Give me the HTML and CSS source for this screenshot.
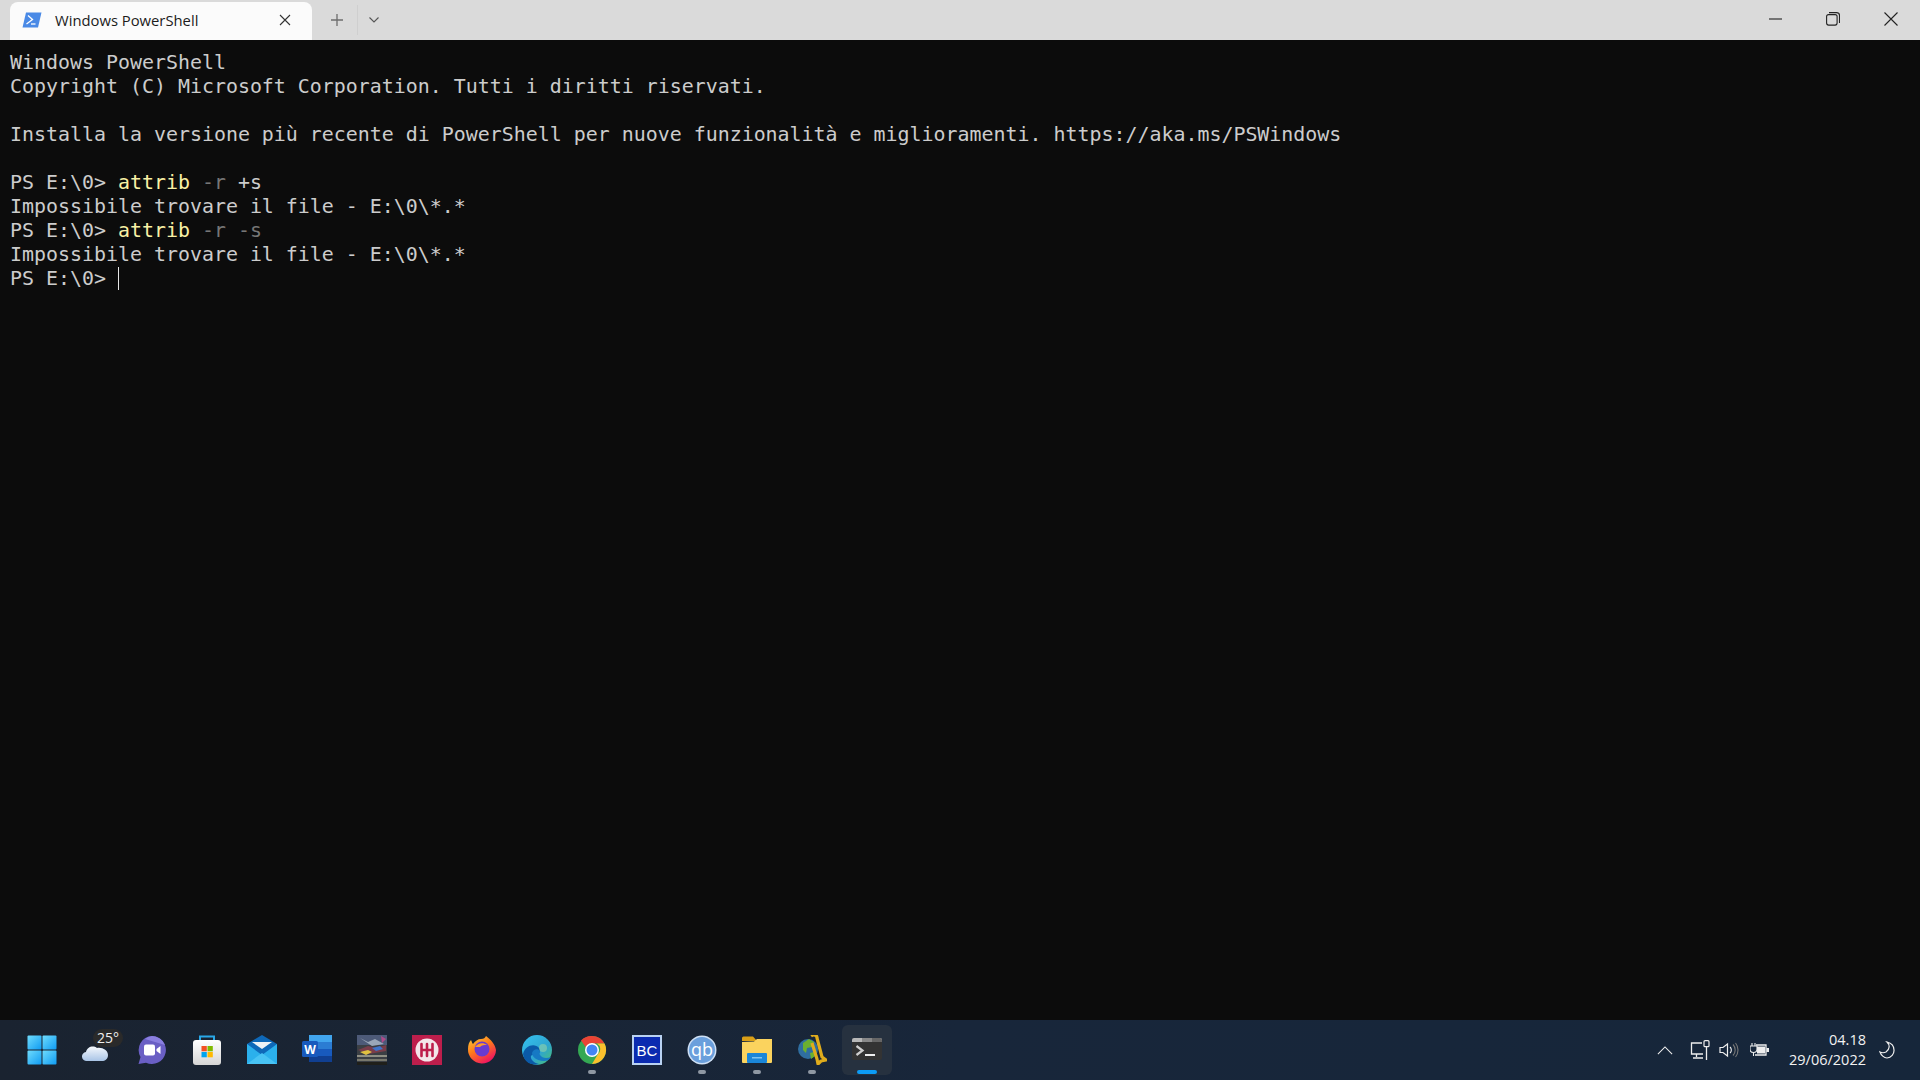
FILE: index.html
```html
<!DOCTYPE html>
<html lang="it">
<head>
<meta charset="utf-8">
<title>Windows PowerShell</title>
<link rel="stylesheet" href="styles.css">
</head>
<body>
<div class="screen">
  <header class="titlebar">
    <div class="tab">
      <svg class="tab-icon" viewBox="0 0 20 16"><path d="M4 .5h15.500L16 15.500H.5z" fill="#4a8ae6"/><path d="M6 3.500l4.500 4-6 4.500" fill="none" stroke="#fff" stroke-width="1.300"/><path d="M9 12h4.500" stroke="#fff" stroke-width="1.300"/></svg>
      <span class="tab-title">Windows PowerShell</span>
      <svg class="tab-close" viewBox="0 0 12 12"><path d="M1 1l10 10M11 1L1 11" stroke="#333" stroke-width="1.100"/></svg>
    </div>
    <div class="tab-actions">
      <svg class="plus" viewBox="0 0 12 12"><path d="M6 0v12M0 6h12" stroke="#6d6d6d" stroke-width="1.300"/></svg>
      <span class="divider"></span>
      <svg class="drop" viewBox="0 0 10 6"><path d="M.5.5L5 5 9.500.5" fill="none" stroke="#555" stroke-width="1.100"/></svg>
    </div>
    <div class="window-controls">
      <svg class="win-btn" viewBox="0 0 14 14"><path d="M1 7h13" stroke="#222" stroke-width="1.100"/></svg>
      <svg class="win-btn" viewBox="0 0 14 14"><rect x=".6" y="2.600" width="10.500" height="10.500" rx="2" fill="none" stroke="#222" stroke-width="1.100"/><path d="M3 .6h7.500a3 3 0 0 1 3 3V11" fill="none" stroke="#222" stroke-width="1.100"/></svg>
      <svg class="win-btn" viewBox="0 0 14 14"><path d="M.5.5l13 13M13.500.5l-13 13" stroke="#222" stroke-width="1.100"/></svg>
    </div>
  </header>

  <main class="terminal">
    <div class="line">Windows PowerShell</div>
    <div class="line">Copyright (C) Microsoft Corporation. Tutti i diritti riservati.</div>
    <div class="line"></div>
    <div class="line">Installa la versione più recente di PowerShell per nuove funzionalità e miglioramenti. https://aka.ms/PSWindows</div>
    <div class="line"></div>
    <div class="line">PS E:\0&gt; <span class="cmd">attrib</span> <span class="param">-r</span> +s</div>
    <div class="line">Impossibile trovare il file - E:\0\*.*</div>
    <div class="line">PS E:\0&gt; <span class="cmd">attrib</span> <span class="param">-r</span> <span class="param">-s</span></div>
    <div class="line">Impossibile trovare il file - E:\0\*.*</div>
    <div class="line">PS E:\0&gt; <span class="caret"></span></div>
  </main>

  <footer class="taskbar">
    <div class="apps">
      <div class="app">
        <svg class="icon" viewBox="0 0 30 30"><defs><linearGradient id="wg" x1="0" y1="0" x2="1" y2="1"><stop offset="0" stop-color="#6fdcfd"/><stop offset="1" stop-color="#0f9bf2"/></linearGradient></defs><rect x=".5" y=".5" width="14" height="14" rx="1" fill="url(#wg)"/><rect x="15.500" y=".5" width="14" height="14" rx="1" fill="url(#wg)"/><rect x=".5" y="15.500" width="14" height="14" rx="1" fill="url(#wg)"/><rect x="15.500" y="15.500" width="14" height="14" rx="1" fill="url(#wg)"/></svg>
      </div>
      <div class="app">
        <svg class="icon" viewBox="0 0 30 30"><defs><linearGradient id="cl" x1="0" y1="0" x2="0" y2="1"><stop offset="0" stop-color="#f4f8fd"/><stop offset="1" stop-color="#a9c4e6"/></linearGradient></defs><path d="M5 26a4.500 4.500 0 0 1-1-9c1-5 7-7 11-4 5-1 11 2 11 7 0 4-3 6-6 6z" fill="url(#cl)"/></svg>
        <span class="weather-badge">25°</span>
      </div>
      <div class="app">
        <svg class="icon" viewBox="0 0 30 30"><path d="M15 1a14 14 0 1 1-6 26.700L1.500 29 3.500 22A14 14 0 0 1 15 1z" fill="#6a5fc4"/><path d="M15 1a14 14 0 0 1 13 9L8 4a14 14 0 0 1 7-3z" fill="#8a7fe0"/><rect x="7" y="9.500" width="11" height="11" rx="2" fill="#fff"/><path d="M19.500 14l4-3v8l-4-3z" fill="#fff"/></svg>
      </div>
      <div class="app">
        <svg class="icon" viewBox="0 0 30 30"><defs><linearGradient id="st" x1="0" y1="0" x2="0" y2="1"><stop offset="0" stop-color="#fff"/><stop offset="1" stop-color="#d5d5d5"/></linearGradient></defs><path d="M8 6V1.500h14V6" fill="none" stroke="#29a8e8" stroke-width="2"/><rect x="1" y="5" width="28" height="25" rx="3" fill="url(#st)"/><rect x="9.500" y="11" width="5.300" height="5.300" fill="#f25022"/><rect x="15.500" y="11" width="5.300" height="5.300" fill="#7fba00"/><rect x="9.500" y="17" width="5.300" height="5.300" fill="#00a4ef"/><rect x="15.500" y="17" width="5.300" height="5.300" fill="#ffb900"/></svg>
      </div>
      <div class="app">
        <svg class="icon" viewBox="0 0 30 30"><path d="M0 9L15 0l15 9v20H0z" fill="#0e68b8"/><path d="M0 9l15 11L30 9v20H0z" fill="#2bb0ec"/><path d="M5 7h20l-10 7z" fill="#eef2f6"/><path d="M0 29l15-11 15 11z" fill="#48c3f4"/></svg>
      </div>
      <div class="app">
        <svg class="icon" viewBox="0 0 30 30"><rect x="7" y="0" width="23" height="27" rx="2" fill="#2b7cd3"/><rect x="7" y="0" width="23" height="7" fill="#41a5ee"/><rect x="7" y="14" width="23" height="7" fill="#185abd"/><rect x="7" y="21" width="23" height="6" fill="#103f91"/><rect x="0" y="6" width="16" height="16" rx="1.500" fill="#185abd"/><text x="8" y="19" class="word-letter">W</text></svg>
      </div>
      <div class="app">
        <svg class="icon" viewBox="0 0 30 30"><rect width="30" height="30" fill="#3b3f44"/><path d="M0 0h30v10H0z" fill="#4d5a78"/><path d="M3 3l8 4 7-3 9 5-12 2z" fill="#9aa7b8"/><path d="M24 1l5 3-4 4z" fill="#b04a8a"/><path d="M1 15l10-4 8 2 10-3v6L12 19z" fill="#7a3d4a"/><path d="M3 17l8-2 4 2-6 3z" fill="#e0c040"/><path d="M15 13l8-2 3 3-7 2z" fill="#3f74c8"/><path d="M0 20h30v2H0z" fill="#8f8f84"/><path d="M0 24h30v2H0z" fill="#77776c"/><path d="M0 27h30v3H0z" fill="#1f1f1a"/></svg>
      </div>
      <div class="app">
        <svg class="icon" viewBox="0 0 30 30"><rect width="30" height="30" fill="#bd1e4c"/><circle cx="15" cy="15" r="11.500" fill="#f3e6ea"/><path d="M9.500 9v12M15 9v12M20.500 9v12M9.500 15h11" stroke="#bd1e4c" stroke-width="2.600" stroke-linecap="round" fill="none"/></svg>
      </div>
      <div class="app">
        <svg class="icon" viewBox="0 0 30 30"><defs><linearGradient id="ff" x1="0" y1="0" x2=".6" y2="1"><stop offset="0" stop-color="#ffd23a"/><stop offset=".5" stop-color="#ff7b1a"/><stop offset="1" stop-color="#f0175f"/></linearGradient></defs><path d="M19 1c5 4 9 8 10 14a14 14 0 1 1-28-1c0-4 1-7 3-9 1 2 1 3 2 4 2-3 5-5 8-5 3 0 4-1 5-3z" fill="url(#ff)"/><circle cx="15" cy="14" r="7.500" fill="#6a3bd0"/><path d="M8 12c3-4 8-5 12-2-3 0-5 0-7 2z" fill="#ff9a2a"/></svg>
      </div>
      <div class="app">
        <svg class="icon" viewBox="0 0 30 30"><defs><linearGradient id="eg" x1="0" y1="0" x2="1" y2="1"><stop offset="0" stop-color="#35c1f1"/><stop offset=".6" stop-color="#2ea5cf"/><stop offset="1" stop-color="#4fc36a"/></linearGradient></defs><circle cx="15" cy="15" r="15" fill="url(#eg)"/><path d="M1 19C3 10 13 8 17 13c2 2 1 5-1 6-3 1-6 0-7 2-1 3 3 7 8 8C9 31 2 27 1 19z" fill="#0b5aa8"/><path d="M18 16c-2-3-7-2-8 2 0 4 5 8 12 8 3 0 5-1 7-4-5 2-9 1-11-2-1-1 0-3 0-4z" fill="#1679c4"/><circle cx="21" cy="13" r="4" fill="#a6dca0" opacity=".5"/></svg>
      </div>
      <div class="app">
        <svg class="icon" viewBox="0 0 30 30"><circle cx="15" cy="15" r="14" fill="#34a853"/><path d="M15 1a14 14 0 0 1 12.500 7.500H15a6.500 6.500 0 0 0-6 4L4 5.500A14 14 0 0 1 15 1z" fill="#ea4335"/><path d="M27.500 8.500A14 14 0 0 1 15 29l6-10a6.500 6.500 0 0 0-1-10.500z" fill="#fbc02d"/><circle cx="15" cy="15" r="7" fill="#fff"/><circle cx="15" cy="15" r="5.500" fill="#4285f4"/></svg>
        <span class="pip"></span>
      </div>
      <div class="app">
        <svg class="icon" viewBox="0 0 30 30"><rect x="0" y="0" width="30" height="30" fill="#b9d2f2"/><rect x="2" y="2" width="26" height="26" fill="#0b2bb0"/><text x="15" y="21" class="bc-text">BC</text></svg>
      </div>
      <div class="app">
        <svg class="icon" viewBox="0 0 30 30"><circle cx="15" cy="15" r="14.500" fill="#cfe0f5"/><circle cx="15" cy="15" r="13" fill="#6a9fdc"/><text x="15" y="21" class="qb-text">qb</text></svg>
        <span class="pip"></span>
      </div>
      <div class="app">
        <svg class="icon" viewBox="0 0 30 30"><path d="M0 3a1.500 1.500 0 0 1 1.500-1.500H11L15 6H0z" fill="#d99f17"/><path d="M0 7l12-.5L15 4h15v23a1 1 0 0 1-1 1H1a1 1 0 0 1-1-1z" fill="#fbd35e"/><rect x="5" y="18" width="20" height="10" rx="1" fill="#1a86d9"/><rect x="10" y="22" width="10" height="1.500" fill="#7cc4f2"/></svg>
        <span class="pip"></span>
      </div>
      <div class="app">
        <svg class="icon" viewBox="0 0 30 30"><circle cx="11" cy="14" r="10" fill="#2f6ea0"/><path d="M6 8l6-4 5 3-2 5-5 1-1 5-3-3zM13 18l4-1 1 4-4 3z" fill="#6bb030"/><path d="M14 1c3-2 6-1 6 2l5 19 4 3-5 1-3 3-1-5L15 8" fill="none" stroke="#e0ac1c" stroke-width="3.200" stroke-linejoin="round"/></svg>
        <span class="pip"></span>
      </div>
      <div class="app active">
        <svg class="icon" viewBox="0 0 30 30"><rect y="3" width="30" height="22" rx="2" fill="#333"/><path d="M2 3h26a2 2 0 0 1 2 2v2H0V5a2 2 0 0 1 2-2z" fill="#b8b8b8"/><path d="M10 3h10v4H10z" fill="#888"/><path d="M20 3h8a2 2 0 0 1 2 2v2H20z" fill="#666"/><path d="M4.500 11l6 4.500-6 4.500" fill="none" stroke="#cfcfcf" stroke-width="2.200"/><path d="M13 20h10" stroke="#eee" stroke-width="2"/></svg>
        <span class="pip pip-active"></span>
      </div>
    </div>
    <div class="tray">
      <svg class="chevron" viewBox="0 0 18 10"><path d="M1 9l8-8 8 8" fill="none" stroke="#eee" stroke-width="1.200"/></svg>
      <svg class="tray-net" viewBox="0 0 20 20"><path d="M12 3H1.500v11H13M6.500 14v3M3 18h10" fill="none" stroke="#eee" stroke-width="1.300"/><rect x="14" y=".7" width="5" height="6" rx="1" fill="none" stroke="#eee" stroke-width="1.200"/><path d="M16.500 7v13" stroke="#eee" stroke-width="1.300"/></svg>
      <svg class="tray-vol" viewBox="0 0 20 16"><path d="M1 5.500h3L8.500 2v12L4 10.500H1z" fill="none" stroke="#eee" stroke-width="1.200"/><path d="M11 5a4 4 0 0 1 0 6" fill="none" stroke="#eee" stroke-width="1.100"/><path d="M14 2.500a8 8 0 0 1 0 11M16.500 1a11 11 0 0 1 0 14" fill="none" stroke="#777" stroke-width="1.100"/></svg>
      <svg class="tray-bat" viewBox="0 0 20 16"><path d="M2 1v3M5 1v3M0 4h7v3a3 3 0 0 1-7 0zM3.500 10v4" fill="none" stroke="#eee" stroke-width="1.100"/><path d="M6 3h10v10H5" fill="none" stroke="#eee" stroke-width="1.300"/><rect x="7" y="4.500" width="8" height="7" fill="#eee"/><rect x="16.500" y="6" width="2.500" height="4" fill="#eee"/></svg>
      <div class="clock"><span>04.18</span><span>29/06/2022</span></div>
      <svg class="tray-moon" viewBox="0 0 16 18"><path d="M8 1c3 3 3 7-1 10-2 1-4 1-6 0 1 3 4 6 7 6a7.500 7.500 0 0 0 7-8c0-4-3-7-7-8z" fill="none" stroke="#eee" stroke-width="1.200"/></svg>
    </div>
  </footer>
</div>
</body>
</html>
```

FILE: styles.css
```css
* { box-sizing: border-box; }
html, body { margin: 0; padding: 0; height: 100%; overflow: hidden; }
.screen { width: 1920px; height: 1080px; display: flex; flex-direction: column; background: #0c0c0c; }

.titlebar { height: 40px; background: #dadada; display: flex; align-items: flex-end; padding-left: 10px; flex: none; }
.tab { width: 302px; height: 38px; background: #fbfbfb; border-radius: 8px 8px 0 0; display: flex; align-items: center; padding: 0 0 2px 12px; color: #1c1c1c; }
.tab-icon { width: 20px; height: 16px; margin-right: 13px; flex: none; }
.tab-title { flex: 1; font: 14.800px "Open Sans", "Noto Sans", sans-serif; }
.tab-close { width: 12px; height: 12px; margin-right: 21px; flex: none; }
.tab-actions { display: flex; align-items: center; height: 30px; align-self: center; padding-left: 19px; }
.plus { width: 12px; height: 12px; }
.divider { width: 1px; height: 30px; background: #cfcfcf; margin: 0 11px 0 14px; }
.drop { width: 10px; height: 6px; }
.window-controls { margin-left: auto; align-self: center; display: flex; gap: 44px; padding-right: 22px; margin-top: -3px; align-items: center; }
.win-btn { width: 14px; height: 14px; }

.terminal { flex: 1; background: #0c0c0c; padding: 11px 10px 0; color: #cccccc; font: 19.930px/24px "DejaVu Sans Mono", "Liberation Mono", monospace; }
.line { height: 24px; white-space: pre; }
.cmd { color: #f9f1a5; }
.param { color: #767676; }
.caret { display: inline-block; width: 1px; height: 23px; background: #e6e6e6; vertical-align: top; }

.taskbar { height: 60px; flex: none; background: linear-gradient(90deg, #1a2330 0%, #18263a 50%, #16263a 100%); display: flex; align-items: center; justify-content: space-between; }
.apps { display: flex; padding-left: 14px; align-items: center; }
.app { position: relative; width: 55px; height: 50px; display: flex; align-items: center; justify-content: center; border-radius: 6px; }
.app.active { background: #26313f; width: 50px; margin-left: 3px; }
.icon { width: 30px; height: 30px; }
.pip { position: absolute; left: 50%; bottom: 1px; width: 8px; height: 4px; margin-left: -4px; border-radius: 2px; background: #8f98a3; }
.pip-active { width: 20px; margin-left: -10px; background: #0c9bf5; }
.weather-badge { position: absolute; top: 4px; left: 24px; background: #2a2a2a; color: #f0f0f0; font: 14px/18px "Open Sans", sans-serif; padding: 0 4px; border-radius: 9px; }
.word-letter { font: bold 12px "Open Sans", sans-serif; fill: #fff; text-anchor: middle; }
.bc-text { font: 15px "Liberation Sans", sans-serif; fill: #fff; text-anchor: middle; }
.qb-text { font: 18px "Open Sans", sans-serif; fill: #fff; text-anchor: middle; }

.tray { display: flex; align-items: center; color: #f2f2f2; }
.chevron { width: 16px; height: 9px; margin-right: 17px; }
.tray-net { width: 20px; height: 20px; margin-right: 9px; }
.tray-vol { width: 20px; height: 16px; margin-right: 11px; }
.tray-bat { width: 20px; height: 16px; margin-right: 17px; }
.clock { display: flex; flex-direction: column; align-items: flex-end; font: 14.500px/20px "Open Sans", "Noto Sans", sans-serif; width: 79px; }
.tray-moon { width: 16px; height: 18px; margin: 0 25px 0 13px; }
```
